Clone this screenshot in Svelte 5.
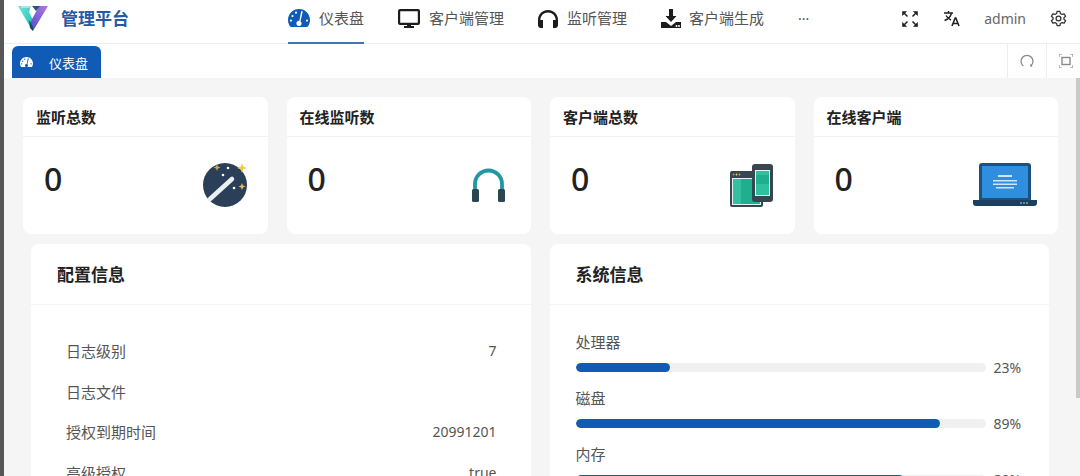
<script>
  const navItems = [
    { key: "dash", label: "仪表盘", active: true },
    { key: "monitor", label: "客户端管理" },
    { key: "headset", label: "监听管理" },
    { key: "download", label: "客户端生成" },
  ];

  const stats = [
    { key: "wand", title: "监听总数", value: 0 },
    { key: "phones", title: "在线监听数", value: 0 },
    { key: "devices", title: "客户端总数", value: 0 },
    { key: "laptop", title: "在线客户端", value: 0 },
  ];

  const config = [
    { label: "日志级别", value: "7" },
    { label: "日志文件", value: "" },
    { label: "授权到期时间", value: "20991201" },
    { label: "高级授权", value: "true" },
  ];

  const system = [
    { label: "处理器", value: 23, color: "#0f5bb5" },
    { label: "磁盘", value: 89, color: "#0f5bb5" },
    { label: "内存", value: 80, color: "#1e6470" },
  ];
</script>

{#snippet gauge(size)}
  <svg width={size} height={size * 0.82} viewBox="0 0 22 18" fill="currentColor">
    <path fill-rule="evenodd" d="M11 0C4.9 0 0 4.9 0 11c0 2.5.8 4.900 2.200 6.600.3.300.6.400 1 .400h15.600c.4 0 .7-.1 1-.4C21.200 15.900 22 13.500 22 11 22 4.900 17.100 0 11 0zM8 2.600a1.100 1.100 0 1 1 0 2.200 1.100 1.100 0 0 1 0-2.200zM4.500 6a1.100 1.100 0 1 1 0 2.200 1.100 1.100 0 0 1 0-2.200zM3 10.500a1.100 1.100 0 1 1 0 2.200 1.100 1.100 0 0 1 0-2.200zM19 10.500a1.100 1.100 0 1 1 0 2.200 1.100 1.100 0 0 1 0-2.200zM13.200 2l1.600.5-2.300 9.700c.7.500 1.100 1.200 1.100 2.100a2.600 2.600 0 1 1-5.200 0c0-1.400 1.100-2.500 2.500-2.600h.5z" />
  </svg>
{/snippet}

<div class="page">
  <div class="edge"></div>
  <div class="main">
    <header class="topbar">
      <div class="brand">
        <svg class="logo" width="30" height="25" viewBox="0 0 30 25">
          <defs>
            <linearGradient id="arm" x1="0" y1="0" x2="1" y2="1">
              <stop offset="0" stop-color="#6fe6de" />
              <stop offset="1" stop-color="#1cc0aa" />
            </linearGradient>
            <linearGradient id="arm2" x1="1" y1="0" x2="0" y2="1">
              <stop offset="0" stop-color="#b876e6" />
              <stop offset="1" stop-color="#4a50c4" />
            </linearGradient>
          </defs>
          <path d="M0 0h13l-2 6 4 8-1 10z" fill="url(#arm)" />
          <path d="M30 0h-9L12 17l3 8z" fill="url(#arm2)" />
          <path d="M3 0h10v2H3z" fill="#b9dcdc" />
          <path d="M14 0h8l-4 5z" fill="#2a5870" />
          <path d="M11 14l4 7v4l-3-3z" fill="#13505e" />
        </svg>
        <span class="brand-name">管理平台</span>
      </div>

      <nav class="nav">
        {#each navItems as item}
          <div class="nav-item" class:active={item.active}>
            {#if item.key === "dash"}
              <span class="nav-icon dash">{@render gauge(22)}</span>
            {:else if item.key === "monitor"}
              <svg width="22" height="19" viewBox="0 0 22 19" fill="#1c1c1c">
                <path fill-rule="evenodd" d="M2 0h18a2 2 0 0 1 2 2v12a2 2 0 0 1-2 2h-7v1h3v2H6v-2h3v-1H2a2 2 0 0 1-2-2V2a2 2 0 0 1 2-2zm.2 2.200v11.600h17.600V2.200z" />
              </svg>
            {:else if item.key === "headset"}
              <svg width="20" height="18" viewBox="0 0 20 18" fill="#1c1c1c">
                <path d="M10 0C4.500 0 0 4.300 0 9.700V15c0 1.700 1.300 3 3 3h2V10H2.400v-.3C2.400 5.600 5.800 2.400 10 2.400s7.600 3.200 7.600 7.300v.3H15v8h2c1.700 0 3-1.300 3-3V9.700C20 4.300 15.500 0 10 0z" />
              </svg>
            {:else}
              <svg class="dl" width="20" height="19" viewBox="0 0 20 19" fill="#1c1c1c">
                <path d="M8 0h4v7h3.500L10 13 4.500 7H8z" />
                <path fill-rule="evenodd" d="M0 13h5l5 4 5-4h5v6H0zm15.500 3a1 1 0 1 0 0 2 1 1 0 0 0 0-2zm2.500 0a1 1 0 1 0 0 2 1 1 0 0 0 0-2z" />
              </svg>
            {/if}
            <span>{item.label}</span>
          </div>
        {/each}
        <div class="more">···</div>
      </nav>

      <div class="tools">
        <svg class="expand" width="16" height="16" viewBox="0 0 16 16" fill="#222" stroke="#222" stroke-width="1.500">
          <path d="M2 2l3.500 3.500M14 2l-3.500 3.500M2 14l3.500-3.500M14 14l-3.500-3.500" />
          <path d="M.5.5h4l-4 4zM15.500.5h-4l4 4zM.5 15.500h4l-4-4zM15.500 15.500h-4l4-4z" stroke-width=".6" />
        </svg>
        <svg width="17" height="17" viewBox="0 0 17 17" fill="none" stroke="#222" stroke-width="1.400">
          <path d="M1 3h9M5.500 1v2M8.500 3c-.6 3-3 6-7 7.500M3 5.500c1 2 3 3.500 5 4.500" />
          <path d="M9 16l3.200-8h.6l3.200 8M10 13.500h5" stroke-width="1.600" />
        </svg>
        <span class="user">admin</span>
        <svg width="17" height="17" viewBox="0 0 24 24" fill="none" stroke="#333" stroke-width="1.800" stroke-linejoin="round">
          <path d="M10 2h4l.7 3 2.300 1.300 3-.9 2 3.400-2.300 2.100v2.200l2.300 2.100-2 3.400-3-.9L14.700 19 14 22h-4l-.7-3L7 17.700l-3 .9-2-3.400 2.300-2.100v-2.200L2 8.800l2-3.400 3 .9L9.300 5z" />
          <circle cx="12" cy="12" r="3.400" />
        </svg>
      </div>
    </header>

    <div class="tabbar">
      <div class="tab">
        {@render gauge(13)}
        <span>仪表盘</span>
      </div>
      <div class="tab-actions">
        <div class="tab-action">
          <svg width="14" height="14" viewBox="0 0 14 14" fill="none" stroke="#8a8a8a" stroke-width="1.300">
            <path d="M3.300 12A6 6 0 1 1 10.700 12" />
            <path d="M10.700 12l.2-1.800M10.700 12l1.500.5" />
          </svg>
        </div>
        <div class="tab-action">
          <svg width="14" height="14" viewBox="0 0 14 14" fill="none" stroke="#8a8a8a" stroke-width="1.100">
            <path d="M0 3V0h3M11 0h3v3M14 11v3h-3M3 14H0v-3" />
            <rect x="3" y="3.500" width="8" height="7" stroke-width="1.400" />
          </svg>
        </div>
      </div>
    </div>

    <div class="scroller">
      <main class="content">
        <section class="stats">
          {#each stats as stat}
            <article class="stat">
              <h3>{stat.title}</h3>
              <div class="stat-body">
                <span class="stat-value">{stat.value}</span>
                {#if stat.key === "wand"}
                  <svg class="stat-icon" width="44" height="44" viewBox="0 0 44 44">
                    <circle cx="22" cy="22" r="22" fill="#2b3f58" />
                    <path d="M7 36L29 16" stroke="#eaeff3" stroke-width="4.500" stroke-linecap="round" />
                    <circle cx="25" cy="5" r="1.300" fill="#fff" />
                    <circle cx="20" cy="12" r="1.300" fill="#fff" />
                    <circle cx="31" cy="25" r="1.300" fill="#fff" />
                    <path d="M39 0l1.300 3.700 3.700 1.300-3.700 1.300L39 10l-1.300-3.700L34 5l3.700-1.300z" fill="#f4c64e" />
                    <path d="M14 1l1 2.500 2.500 1-2.500 1-1 2.500-1-2.500-2.500-1 2.500-1z" fill="#c9a94a" />
                    <path d="M39 20l1 2.500 2.500 1-2.500 1-1 2.500-1-2.500-2.500-1 2.500-1z" fill="#e4bd50" />
                  </svg>
                {:else if stat.key === "phones"}
                  <svg class="stat-icon headset" width="33" height="34" viewBox="0 0 33 34">
                    <path d="M3 23V16a13.500 13.500 0 0 1 27 0v7" fill="none" stroke="#1f98a4" stroke-width="3.800" />
                    <rect x="0" y="21" width="7" height="13" rx="1.500" fill="#2c4650" />
                    <rect x="26" y="21" width="7" height="13" rx="1.500" fill="#2c4650" />
                  </svg>
                {:else if stat.key === "devices"}
                  <svg class="stat-icon devices" width="43" height="43" viewBox="0 0 43 43">
                    <rect x="0" y="7" width="33" height="36" rx="2" fill="#37474f" />
                    <rect x="2" y="14" width="29" height="27" fill="#e6f2ee" />
                    <rect x="3" y="15" width="27" height="25" fill="#1fae8e" />
                    <rect x="3" y="15" width="8" height="25" fill="#34bfa0" />
                    <circle cx="3.500" cy="10.500" r=".9" fill="#e57373" />
                    <circle cx="6.500" cy="10.500" r=".9" fill="#ffd54f" />
                    <circle cx="9.500" cy="10.500" r=".9" fill="#81c784" />
                    <rect x="22" y="0" width="21" height="38" rx="3" fill="#37474f" />
                    <rect x="25" y="6" width="15" height="26" fill="#e6f2ee" />
                    <rect x="26" y="7" width="13" height="24" fill="#2dc1a0" />
                    <rect x="26" y="11" width="13" height="9" fill="#1fae8e" />
                  </svg>
                {:else}
                  <svg class="stat-icon" width="64" height="44" viewBox="0 0 64 44">
                    <path d="M6 3a3 3 0 0 1 3-3h46a3 3 0 0 1 3 3v36H6z" fill="#1d5180" />
                    <rect x="9" y="3" width="46" height="32" fill="#2f8fde" />
                    <rect x="25" y="12" width="14" height="2" fill="#cfe6f8" />
                    <rect x="20" y="17" width="24" height="1.500" fill="#cfe6f8" />
                    <rect x="20" y="20.500" width="24" height="1.500" fill="#cfe6f8" />
                    <rect x="23" y="24" width="18" height="1.500" fill="#cfe6f8" />
                    <path d="M0 37h64v3a3 3 0 0 1-3 3H3a3 3 0 0 1-3-3z" fill="#1d3f5e" />
                    <circle cx="48" cy="40" r=".8" fill="#cfe6f8" />
                    <circle cx="51" cy="40" r=".8" fill="#cfe6f8" />
                    <circle cx="54" cy="40" r=".8" fill="#cfe6f8" />
                  </svg>
                {/if}
              </div>
            </article>
          {/each}
        </section>

        <section class="panels">
          <article class="panel">
            <h2>配置信息</h2>
            <div class="panel-body config">
              {#each config as row}
                <div class="config-row">
                  <span>{row.label}</span>
                  <span class="num">{row.value}</span>
                </div>
              {/each}
            </div>
          </article>

          <article class="panel">
            <h2>系统信息</h2>
            <div class="panel-body system">
              {#each system as row}
                <div class="meter">
                  <div class="meter-label">{row.label}</div>
                  <div class="meter-line">
                    <div class="track">
                      <div class="fill" style:width="{row.value}%" style:background={row.color}></div>
                    </div>
                    <span class="num">{row.value}%</span>
                  </div>
                </div>
              {/each}
            </div>
          </article>
        </section>
      </main>
      <div class="scrollbar"><div class="thumb"></div></div>
    </div>
  </div>
</div>

<style>
  :global(body) {
    background: #fff;
    overflow: hidden;
  }

  .page {
    display: flex;
    height: 476px;
    overflow: hidden;
    color: #333;
    font-family: "Noto Sans", "Noto Sans CJK SC", sans-serif;
  }

  .edge {
    flex: 0 0 4px;
    background: #57575a;
  }

  .main {
    flex: 1;
    min-width: 0;
    display: flex;
    flex-direction: column;
  }

  .topbar {
    flex: 0 0 44px;
    box-sizing: border-box;
    display: flex;
    align-items: center;
    padding: 0 13px 0 14px;
    border-bottom: 1px solid #eceef0;
  }

  .brand {
    display: flex;
    align-items: center;
    width: 270px;
    height: 100%;
  }

  .logo {
    margin: -7px 13px 0 0;
  }

  .brand-name {
    color: #2559a6;
    font-size: 17px;
    font-weight: 700;
    margin-top: -9px;
  }

  .nav {
    display: flex;
    align-items: center;
    gap: 34px;
    height: 43px;
    font-size: 15px;
    color: #555;
  }

  .nav-item {
    position: relative;
    display: flex;
    align-items: center;
    gap: 9px;
    height: 43px;
    box-sizing: border-box;
    padding-bottom: 6px;
    line-height: 1;
  }

  .dl {
    margin-right: -1px;
  }

  .nav-item.active::after {
    content: "";
    position: absolute;
    left: 0;
    right: 0;
    bottom: -1px;
    height: 2px;
    background: #3f76ab;
  }

  .dash {
    display: flex;
    color: #0f5bb5;
  }

  .more {
    color: #555;
    font-size: 14px;
    padding-bottom: 6px;
  }

  .tools {
    margin-left: auto;
    display: flex;
    align-items: center;
    padding-bottom: 6px;
    color: #666;
    font-size: 14px;
  }

  .user {
    margin: 0 24px;
  }

  .expand {
    margin-right: 25px;
  }

  .tabbar {
    flex: 0 0 34px;
    display: flex;
    justify-content: space-between;
    align-items: flex-end;
    padding-left: 8px;
    overflow: hidden;
  }

  .tab {
    display: flex;
    align-items: center;
    gap: 16px;
    width: 89px;
    height: 32px;
    box-sizing: border-box;
    padding-left: 8px;
    border-radius: 6px 6px 0 0;
    background: #0f5bb5;
    color: #fff;
    font-size: 13px;
  }

  .tab-actions {
    display: flex;
    height: 34px;
    margin-right: -5px;
  }

  .tab-action {
    display: flex;
    align-items: center;
    justify-content: center;
    width: 39px;
    border-left: 1px solid #eee;
    box-sizing: border-box;
  }

  .scroller {
    flex: 1;
    min-height: 0;
    display: flex;
    background: #f5f5f5;
  }

  .content {
    flex: 1;
    min-width: 0;
    box-sizing: border-box;
    padding: 19px 18px 0 19px;
  }

  .scrollbar {
    flex: 0 0 4px;
  }

  .thumb {
    height: 320px;
    background: #c9c9c9;
  }

  .stats {
    display: grid;
    grid-template-columns: repeat(4, 1fr);
    gap: 19px;
  }

  .stat {
    height: 137px;
    background: #fff;
    border-radius: 8px;
  }

  .stat h3 {
    margin: 0;
    height: 40px;
    box-sizing: border-box;
    padding: 0 13px;
    border-bottom: 1px solid #f2f2f2;
    color: #222;
    font-size: 15px;
    font-weight: 700;
    line-height: 40px;
  }

  .stat-body {
    display: flex;
    justify-content: space-between;
    align-items: center;
    height: 86px;
    padding: 0 21px 0 21px;
  }

  .stat-value {
    color: #222;
    font-size: 32px;
    font-weight: 500;
    margin-top: -4px;
  }

  .stat-icon {
    margin-top: 10px;
  }

  .headset {
    margin-right: 5px;
  }

  .devices {
    margin-right: 1px;
  }

  .panels {
    display: grid;
    grid-template-columns: 1fr 1fr;
    gap: 19px;
    margin: 10px 9px 0 8px;
  }

  .panel {
    background: #fff;
    border-radius: 8px;
    height: 400px;
  }

  .panel h2 {
    margin: 0;
    height: 61px;
    box-sizing: border-box;
    padding: 0 26px;
    border-bottom: 1px solid #f4f4f4;
    color: #222;
    font-size: 17px;
    font-weight: 700;
    line-height: 62px;
  }

  .config {
    padding: 26px 34px 0 35px;
  }

  .config-row {
    display: flex;
    justify-content: space-between;
    height: 40.500px;
    color: #555;
    font-size: 15px;
    line-height: 40.500px;
  }

  .num {
    font-size: 14px;
  }

  .system {
    padding: 26px 26px 0;
  }

  .meter {
    height: 56px;
    color: #555;
    font-size: 15px;
  }

  .meter-label {
    height: 22px;
    line-height: 22px;
  }

  .meter-line {
    display: flex;
    align-items: center;
    gap: 8px;
    height: 26px;
    margin-top: 1px;
  }

  .track {
    width: 410px;
    height: 9px;
    border-radius: 5px;
    background: #f0f0f0;
    overflow: hidden;
  }

  .fill {
    height: 100%;
    border-radius: 5px;
  }
</style>
